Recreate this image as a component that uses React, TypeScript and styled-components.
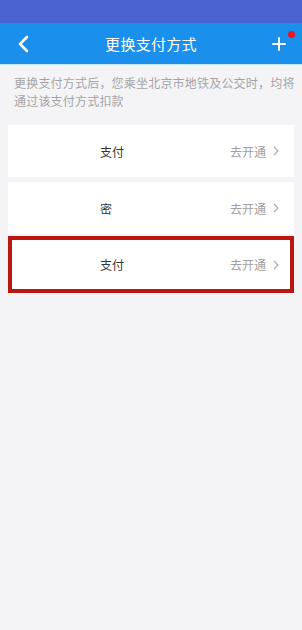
import React from 'react';
import styled, { createGlobalStyle } from 'styled-components';

const GlobalStyle = createGlobalStyle`
  html, body {
    margin: 0;
    padding: 0;
    background: #f4f4f6;
  }
  body {
    font-family: "Noto Sans CJK SC", "Noto Sans", sans-serif;
  }
`;

const Page = styled.div`
  width: 302px;
  min-height: 630px;
  background: #f4f4f6;
`;

const StatusBar = styled.div`
  height: 23px;
  background: #4a63cf;
`;

const NavBar = styled.div`
  height: 42px;
  background: #1a8fec;
  display: flex;
  align-items: center;
  justify-content: space-between;
  padding: 0 12px;
  color: #fff;
  border-bottom: 1px solid #bfe9f5;
  box-sizing: border-box;
`;

const NavTitle = styled.div`
  font-size: 15px;
  letter-spacing: 0.3px;
`;

const IconBox = styled.div`
  width: 22px;
  height: 22px;
  position: relative;
  display: flex;
  align-items: center;
  justify-content: center;
`;

const Dot = styled.span`
  position: absolute;
  top: -2px;
  right: -5px;
  width: 7px;
  height: 7px;
  border-radius: 50%;
  background: #e8141e;
`;

const Notice = styled.p`
  margin: 0;
  padding: 9px 4px 0 14px;
  font-size: 12px;
  line-height: 18px;
  color: #a4a4a8;
  letter-spacing: 0.2px;
`;

const List = styled.div`
  display: flex;
  flex-direction: column;
  gap: 5px;
  padding: 15px 8px 0 8px;
`;

const Card = styled.div<{ $highlight?: boolean }>`
  height: ${(p) => (p.$highlight ? '57px' : '52px')};
  box-sizing: border-box;
  background: #fff;
  display: flex;
  align-items: center;
  padding: 0 ${(p) => (p.$highlight ? '11px' : '15px')} 0
    ${(p) => (p.$highlight ? '88px' : '92px')};
  border: ${(p) => (p.$highlight ? '4px solid #b9170f' : 'none')};
  margin-top: ${(p) => (p.$highlight ? '-3px' : '0')};
`;

const Label = styled.div`
  flex: 1;
  font-size: 12px;
  color: #333;
`;

const Action = styled.div`
  display: flex;
  align-items: center;
  gap: 7px;
  font-size: 12px;
  color: #a0a0a0;
`;

const Chevron = () => (
  <svg width="6" height="10" viewBox="0 0 6 10">
    <path d="M1 1 L5 5 L1 9" stroke="#a8a8a8" strokeWidth="1.1" fill="none" />
  </svg>
);

const rows = [
  { label: '支付' },
  { label: '密' },
  { label: '支付', highlight: true },
];

const App = () => {
  return (
    <Page>
      <GlobalStyle />
      <StatusBar />
      <NavBar>
        <IconBox>
          <svg width="12" height="18" viewBox="0 0 12 18">
            <path d="M10 2 L3 9 L10 16" stroke="#fff" strokeWidth="2.6" fill="none" strokeLinecap="round" strokeLinejoin="round" />
          </svg>
        </IconBox>
        <NavTitle>更换支付方式</NavTitle>
        <IconBox>
          <svg width="14" height="14" viewBox="0 0 14 14">
            <path d="M7 1 V13 M1 7 H13" stroke="#fff" strokeWidth="2" fill="none" strokeLinecap="round" />
          </svg>
          <Dot />
        </IconBox>
      </NavBar>
      <Notice>更换支付方式后，您乘坐北京市地铁及公交时，均将通过该支付方式扣款</Notice>
      <List>
        {rows.map((r, i) => (
          <Card key={i} $highlight={r.highlight}>
            <Label>{r.label}</Label>
            <Action>
              去开通
              <Chevron />
            </Action>
          </Card>
        ))}
      </List>
    </Page>
  );
};

export default App;
